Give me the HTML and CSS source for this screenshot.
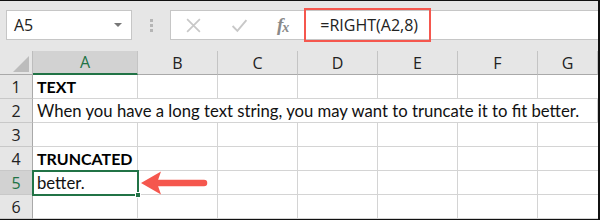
FILE: index.html
```html
<!DOCTYPE html>
<html>
<head>
<meta charset="utf-8">
<link rel="stylesheet" href="styles.css">
</head>
<body>
<div class="frame">
  <div class="toolbar">
    <div class="namebox">
      <span class="name">A5</span>
      <svg class="dd" width="10" height="6" viewBox="0 0 10 6"><path d="M1 1h8L5 5z" fill="#777"/></svg>
    </div>
    <div class="dots"><i></i><i></i><i></i></div>
    <div class="fbar">
      <svg class="ic" width="17" height="17" viewBox="0 0 16 16"><path d="M2 2L14 14M14 2L2 14" stroke="#c8c8c8" stroke-width="1.6" fill="none"/></svg>
      <svg class="ic" width="17" height="17" viewBox="0 0 16 16"><path d="M1.5 8.5L6 13L14.5 3" stroke="#c8c8c8" stroke-width="1.8" fill="none"/></svg>
      <span class="fx">f<sub>x</sub></span>
      <div class="formula">=RIGHT(A2,8)</div>
    </div>
  </div>
  <div class="sheet">
    <div class="hd corner"><svg width="16" height="16" viewBox="0 0 16 16"><path d="M16 0V16H0z" fill="#bcbcbc"/></svg></div>
    <div class="hd col sel">A</div>
    <div class="hd col">B</div>
    <div class="hd col">C</div>
    <div class="hd col">D</div>
    <div class="hd col">E</div>
    <div class="hd col">F</div>
    <div class="hd col last">G</div>

    <div class="hd row">1</div>
    <div class="c b">TEXT</div><div class="c"></div><div class="c"></div><div class="c"></div><div class="c"></div><div class="c"></div><div class="c last"></div>

    <div class="hd row">2</div>
    <div class="c span">When you have a long text string, you may want to truncate it to fit better.</div>

    <div class="hd row">3</div>
    <div class="c"></div><div class="c"></div><div class="c"></div><div class="c"></div><div class="c"></div><div class="c"></div><div class="c last"></div>

    <div class="hd row">4</div>
    <div class="c b">TRUNCATED</div><div class="c"></div><div class="c"></div><div class="c"></div><div class="c"></div><div class="c"></div><div class="c last"></div>

    <div class="hd row rsel">5</div>
    <div class="c active">better.<span class="handle"></span></div><div class="c"></div><div class="c"></div><div class="c"></div><div class="c"></div><div class="c"></div><div class="c last"></div>

    <div class="hd row">6</div>
    <div class="c"></div><div class="c"></div><div class="c"></div><div class="c"></div><div class="c"></div><div class="c"></div><div class="c last"></div>

    <svg class="arrow" width="70" height="26" viewBox="0 0 70 26"><path d="M0 13L20 1.5L16 13L20 24.5z" fill="#f5574e"/><path d="M16 13H63" stroke="#f5574e" stroke-width="6.5" stroke-linecap="round"/></svg>
  </div>
</div>
</body>
</html>
```
FILE: styles.css
```css
* { box-sizing: border-box; }
html, body { margin: 0; padding: 0; background: #fff; }
.frame {
  width: 600px; height: 220px; overflow: hidden;
  background: #e6e6e6;
  border-top: 1px solid #111;
  border-right: 2px solid #111;
  border-bottom: 1px solid #111;
  font-family: "Lato", "Open Sans", sans-serif;
}
.toolbar {
  height: 50px;
  display: flex;
  align-items: flex-start;
  padding: 9px 0 0 6px;
}
.namebox {
  width: 126px; height: 30px;
  background: #fff;
  border: 1px solid #c6c6c6;
  display: flex; align-items: center; justify-content: space-between;
  padding: 0 8px 0 7px;
}
.name { font-family: "Open Sans", sans-serif; font-size: 16px; color: #222; }
.dots {
  width: 38px; height: 30px;
  display: flex; flex-direction: column; align-items: center; justify-content: center; gap: 2px;
}
.dots i { display: block; width: 3px; height: 3px; background: #b5b5b5; }
.fbar {
  flex: 1; height: 30px;
  background: #fff;
  border: 1px solid #c6c6c6; border-right: none;
  display: flex; align-items: center;
  padding-left: 14px;
}
.ic { margin-right: 29px; }
.fx {
  font-family: "Liberation Serif", serif; font-style: italic; font-weight: bold;
  color: #8a8a8a; font-size: 19px; letter-spacing: -1px;
}
.fx sub { font-size: 14px; vertical-align: -1px; }
.formula {
  margin-left: 16px;
  height: 34px;
  border: 2px solid #f5574e;
  padding: 0 0 0 14px;
  width: 127px;
  display: flex; align-items: center;
  font-family: "Open Sans", sans-serif; font-size: 16px; color: #222;
}
.sheet {
  position: relative;
  display: grid;
  grid-template-columns: 33px 105px 80px 80px 80px 80px 80px 60px;
  grid-template-rows: 24px repeat(6, 24px);
  background: #fff;
}
.hd {
  background: #e6e6e6;
  color: #222;
  font-family: "Open Sans", sans-serif; font-size: 16px;
  display: flex; align-items: center; justify-content: center;
}
.corner { align-items: flex-end; justify-content: flex-end; padding: 0 3px 2px 0; border-right: 1px solid #bdbdbd; border-bottom: 1px solid #a9a9a9; }
.col { border-right: 1px solid #c4c4c4; border-bottom: 1px solid #a9a9a9; }
.col.sel { background: #d2d2d2; color: #217346; border-bottom: 2px solid #217346; }
.row { border-right: 1px solid #a9a9a9; border-bottom: 1px solid #c8c8c8; }
.row.rsel { background: #d2d2d2; color: #217346; }
.c {
  border-right: 1px solid #d4d4d4; border-bottom: 1px solid #d4d4d4;
  font-size: 16.7px; color: #111;
  padding-left: 4px;
  display: flex; align-items: center;
  white-space: nowrap;
}
.c.last { border-right: none; }
.c.b { font-weight: 700; font-size: 16px; color: #000; }
.span { grid-column: 2 / span 7; }
.active { position: relative; outline: 2px solid #217346; outline-offset: -1px; }
.handle {
  position: absolute; right: -4px; bottom: -4px;
  width: 6px; height: 6px; background: #217346; border: 1px solid #fff;
}
.arrow { position: absolute; left: 141px; top: 119px; }
```
